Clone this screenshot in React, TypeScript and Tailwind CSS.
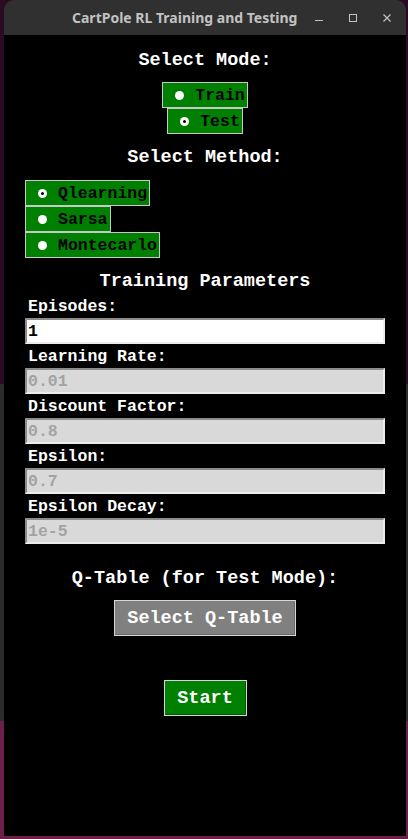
import React from "react";

const mono = "font-['Liberation_Mono','Courier_New',monospace] font-bold";

function Radio({ label, checked }: { label: string; checked?: boolean }) {
    return (
        <div className="flex h-[26px] items-center border border-[#c8c8c8] bg-[#008000] pl-[12px] pr-[2px]">
            <span className="flex h-[9px] w-[9px] items-center justify-center rounded-full bg-white">
                {checked && <span className="h-[3px] w-[3px] rounded-full bg-black" />}
            </span>
            <span className={`${mono} ml-[11px] pt-[3px] text-[16.5px] leading-none text-black`}>{label}</span>
        </div>
    );
}

function Field({ label, value, active }: { label: string; value: string; active?: boolean }) {
    return (
        <div className="flex flex-col">
            <div className={`${mono} flex h-[24px] items-center pl-[3px] pt-[2px] text-[16.5px] leading-none text-white`}>
                {label}
            </div>
            <div
                className={`flex h-[26px] items-center border-2 border-t-[#8c8c8c] border-l-[#8c8c8c] border-b-[#ececec] border-r-[#ececec] pl-[1px] pt-[3px] ${mono} text-[16.5px] leading-none ${
                    active ? "bg-white text-black" : "bg-[#d9d9d9] text-[#a3a3a3]"
                }`}
            >
                {value}
            </div>
        </div>
    );
}

function Heading({ children }: { children: React.ReactNode }) {
    return (
        <div className={`${mono} flex h-[24px] items-center justify-center pt-[4px] text-[18.5px] leading-none text-white`}>
            {children}
        </div>
    );
}

export default function App() {
    return (
        <div className="h-[839px] w-[408px] overflow-hidden bg-[linear-gradient(to_bottom,#2c0b22_0px,#2c0b22_384px,#2b2b2b_384px,#2b2b2b_721px,#6c1f4a_721px)] pl-[4px]">
            <div className="flex h-[836px] w-[402px] flex-col overflow-hidden rounded-t-[10px]">
                {/* Title bar */}
                <div className="flex h-[35px] shrink-0 items-center bg-[#303030]">
                    <span className="ml-[68px] font-['Noto_Sans',sans-serif] text-[14px] font-bold text-[#c2c2c2]">
                        CartPole RL Training and Testing
                    </span>
                    <div className="flex-1" />
                    <div className="flex items-center gap-[26px] pr-[15px]">
                        <svg width="8" height="8" viewBox="0 0 8 8">
                            <line x1="0" y1="6.5" x2="8" y2="6.5" stroke="#c2c2c2" strokeWidth="1" />
                        </svg>
                        <svg width="8" height="8" viewBox="0 0 8 8">
                            <rect x="0.5" y="0.5" width="7" height="7" fill="none" stroke="#c2c2c2" strokeWidth="1" />
                        </svg>
                        <svg width="8" height="8" viewBox="0 0 8 8">
                            <path d="M0.5 0.5 L7.5 7.5 M7.5 0.5 L0.5 7.5" stroke="#c2c2c2" strokeWidth="1.2" />
                        </svg>
                    </div>
                </div>

                {/* Body */}
                <div className="flex flex-1 flex-col bg-black px-[21px] pt-[12px]">
                    <Heading>Select Mode:</Heading>
                    <div className="mt-[11px] flex flex-col items-center">
                        <Radio label="Train" />
                        <Radio label="Test" checked />
                    </div>

                    <div className="mt-[10px]">
                        <Heading>Select Method:</Heading>
                    </div>
                    <div className="mt-[12px] flex flex-col items-start">
                        <Radio label="Qlearning" checked />
                        <Radio label="Sarsa" />
                        <Radio label="Montecarlo" />
                    </div>

                    <div className="mt-[10px]">
                        <Heading>Training Parameters</Heading>
                    </div>
                    <div className="mt-[2px] flex flex-col">
                        <Field label="Episodes:" value="1" active />
                        <Field label="Learning Rate:" value="0.01" />
                        <Field label="Discount Factor:" value="0.8" />
                        <Field label="Epsilon:" value="0.7" />
                        <Field label="Epsilon Decay:" value="1e-5" />
                    </div>

                    <div className="mt-[21px]">
                        <Heading>Q-Table (for Test Mode):</Heading>
                    </div>
                    <div className="mt-[11px] flex justify-center">
                        <div className={`${mono} flex h-[36px] w-[182px] items-center justify-center border border-[#d6d6d6] bg-[#808080] pt-[2px] text-[18.5px] leading-none text-white shadow-[inset_-1px_-1px_0_#6a6a6a]`}>
                            Select Q-Table
                        </div>
                    </div>
                    <div className="mt-[44px] flex justify-center">
                        <div className={`${mono} flex h-[36px] w-[83px] items-center justify-center border border-[#d6d6d6] bg-[#008000] pt-[2px] text-[18.5px] leading-none text-white shadow-[inset_-1px_-1px_0_#005a00]`}>
                            Start
                        </div>
                    </div>
                </div>
            </div>
        </div>
    );
}
